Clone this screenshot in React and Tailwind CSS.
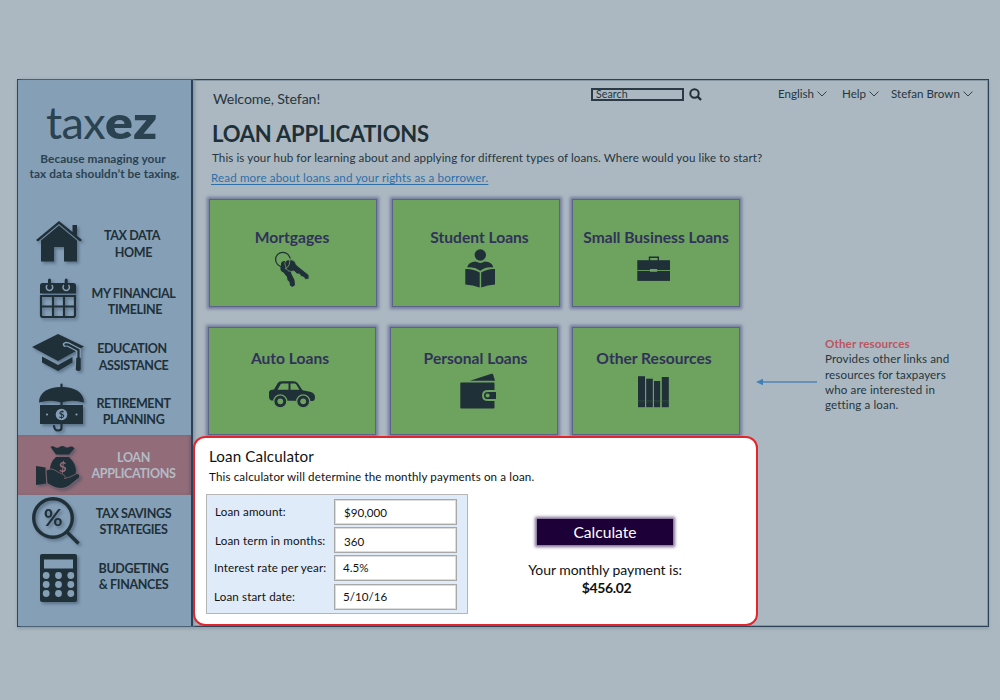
import React from "react";

const ink = "#203038";

function HomeIcon() {
  return (
    <g fill={ink}>
      <path d="M59 221 L36 240 L38 241.500 L59 224 L80 241.500 L82 240 L77 235.700 V225 H72.500 V232 Z" />
      <path d="M59 225.500 L41 240.500 V261.500 H54 V247 H64 V261.500 H77 V240.500 Z" />
    </g>
  );
}

function CalendarIcon() {
  return (
    <g>
      <path d="M40 293.500 V285.500 Q40 283 42.500 283 H73.500 Q76 283 76 285.500 V293.500 Z" fill={ink} />
      <path d="M41 296 H75 V315 Q75 317 73 317 H43 Q41 317 41 315 Z M53 296 V317 M64 296 V317 M41 306.500 H75" fill="none" stroke={ink} strokeWidth="2.200" />
      <g fill="none" stroke="#859fb7" strokeWidth="1.500">
        <path d="M47.300 285 A3.200 3.200 0 1 0 51.700 285" />
        <path d="M64 285 A3.200 3.200 0 1 0 68.400 285" />
      </g>
      <path d="M49.500 280 V287 M66.200 280 V287" stroke={ink} strokeWidth="3" strokeLinecap="round" />
    </g>
  );
}

function CapIcon() {
  return (
    <g>
      <path d="M58 334 L84 346.500 L58 361 L32 347 Z" fill={ink} />
      <path d="M42 356.500 L58 365 L72.500 357 V362.500 L58 371 L42 362.500 Z" fill={ink} />
      <path d="M65 344.500 Q67 343.500 70 345.500 L78.500 350 V357" fill="none" stroke="#859fb7" strokeWidth="4.600" strokeLinecap="round" />
      <path d="M65.500 344.500 Q67 343.800 70 345.500 L78.500 350 V361" fill="none" stroke={ink} strokeWidth="2.200" strokeLinecap="round" />
      <path d="M76.300 358 Q78.500 356.500 80.700 358 V370 Q78.500 371.800 75.800 370 Z" fill={ink} />
    </g>
  );
}

function UmbrellaIcon() {
  return (
    <g>
      <path d="M39 402.500 C39 392 49 387 60.500 387 H62.500 C74 387 84 392 84 402.500 Q72.500 399 61.500 402.500 Q50.500 399 39 402.500 Z" fill={ink} />
      <path d="M61.500 384.500 V428 Q61.500 430.500 58 430.500 Q54.500 430.500 54 426" fill="none" stroke={ink} strokeWidth="2.200" strokeLinecap="round" />
      <rect x="40" y="405" width="43" height="19" fill={ink} />
      <circle cx="61.500" cy="414.500" r="5.800" fill="#859fb7" />
      <circle cx="47" cy="414.500" r="1.100" fill="#859fb7" />
      <circle cx="76.500" cy="414.500" r="1.100" fill="#859fb7" />
      <text x="61.500" y="418.200" textAnchor="middle" fontSize="10" fontFamily="Lato" fill={ink}>$</text>
    </g>
  );
}

function MoneyBagIcon() {
  return (
    <g>
      <path d="M50.500 447 Q53 445.500 55.500 447.500 Q58 448.500 60 446.800 Q62.500 444.800 65.500 447.200 Q68 448.300 70.500 446.500 Q73 446 74.500 448.500 L69 454.500 H56 Z" fill={ink} />
      <path d="M56 457 H69 C75 463 77.500 469 75 476 L66 480 L50 470 C50 464 52.500 460 56 457 Z" fill={ink} />
      <text x="62.500" y="471.500" textAnchor="middle" fontSize="13" fontFamily="Lato" fill="#926d79">$</text>
      <path d="M36 466 L45.500 467.500 L46 483.500 L36 485 Z" fill={ink} />
      <path d="M47 470 Q52 467.500 57 471.500 L64 475 Q66.500 477 64.500 478.500 L70 477 L77 473.500 Q80.500 474 79.500 477.500 L69 486 Q63 490 55 487.500 L47 483.500 L46 470.500 Z" fill={ink} stroke="#926d79" strokeWidth="0.700" />
    </g>
  );
}

function PercentLensIcon() {
  return (
    <g>
      <circle cx="53" cy="518" r="19.300" fill="none" stroke={ink} strokeWidth="3.400" />
      <path d="M66.500 531.500 L78.500 543.500" stroke={ink} strokeWidth="3.400" />
      <text x="53" y="525.500" textAnchor="middle" fontSize="22" fontWeight="700" fontFamily="Lato" textLength="18.500" lengthAdjust="spacingAndGlyphs" fill={ink}>%</text>
    </g>
  );
}

function CalculatorIcon() {
  return (
    <g>
      <rect x="40" y="554" width="37" height="48" rx="2" fill={ink} />
      <rect x="44" y="559.500" width="29" height="9" fill="#859fb7" />
      {[575.5, 584.5, 593.5].map((y) =>
        [46.2, 58.5, 70.8].map((x) => <circle key={x + "-" + y} cx={x} cy={y} r="3.400" fill="#859fb7" />)
      )}
    </g>
  );
}

const nav = [
  { a: "TAX DATA", b: "HOME", row: "h-[57px]", box: "18 215 66 57", h: 57, Icon: HomeIcon, ta: "mr-[3px]", tb: "" },
  { a: "MY FINANCIAL", b: "TIMELINE", row: "h-[58px]", box: "18 272 66 58", h: 58, Icon: CalendarIcon, ta: "", tb: "ml-[3px]" },
  { a: "EDUCATION", b: "ASSISTANCE", row: "h-[53px] mb-1", box: "18 330 66 53", h: 53, Icon: CapIcon, ta: "mr-[3px]", tb: "" },
  { a: "RETIREMENT", b: "PLANNING", row: "h-12", box: "18 387 66 48", h: 48, Icon: UmbrellaIcon, ta: "", tb: "" },
  { a: "LOAN", b: "APPLICATIONS", row: "h-[60px] bg-[#926d79] !text-[#b3bcc6] shadow-[inset_-2px_0_3px_#7f6070]", box: "18 435 66 60", h: 60, Icon: MoneyBagIcon, ta: "", tb: "" },
  { a: "TAX SAVINGS", b: "STRATEGIES", row: "h-[52px]", box: "18 495 66 52", h: 52, Icon: PercentLensIcon, ta: "", tb: "" },
  { a: "BUDGETING", b: "& FINANCES", row: "h-[58px]", box: "18 547 66 58", h: 58, Icon: CalculatorIcon, ta: "", tb: "" },
];

function Sidebar() {
  return (
    <aside className="flex w-[175px] shrink-0 flex-col border-r-2 border-[#2c4257] bg-[#859fb7] shadow-[2px_0_3px_#8496a2]">
      <div className="ml-[28px] mt-[15px] flex h-[54px] whitespace-nowrap text-[45px] leading-[54px] text-[#2b4250]">
        <span className="tracking-[-0.6px]">tax</span>
        <span className="origin-left scale-x-[1.15] font-extrabold">ez</span>
      </div>
      <div className="mt-[2px] flex h-[64px] flex-col items-center text-[11.8px] font-bold leading-[15.3px] tracking-[0.08px] text-[#2b4250]">
        <span className="mr-[3px] mt-[-0.5px] whitespace-nowrap">Because managing your</span>
        <span className="whitespace-nowrap">tax data shouldn’t be taxing.</span>
      </div>
      <nav className="flex flex-col">
        {nav.map(({ a, b, row, box, h, Icon, ta, tb }) => (
          <a key={a} className={"flex items-center text-[12.5px] font-bold leading-[16.5px] tracking-[-0.36px] text-[#203038] " + row}>
            <svg width="66" height={h} viewBox={box} className="shrink-0 overflow-visible drop-shadow-[2px_2px_1.5px_rgba(50,70,90,0.5)]">
              <Icon />
            </svg>
            <span className="flex w-[99px] flex-col items-center whitespace-nowrap pt-[2px]">
              <span className={ta}>{a}</span>
              <span className={tb}>{b}</span>
            </span>
          </a>
        ))}
      </nav>
    </aside>
  );
}

function Chevron() {
  return (
    <svg width="10" height="6" viewBox="0 0 10 6" className="ml-[3px]">
      <path d="M0.500 0.500 L5 5 L9.500 0.500" fill="none" stroke="#34444e" strokeWidth="1" />
    </svg>
  );
}

function TopBar() {
  return (
    <header className="flex h-[38px] items-start text-[#26363f]">
      <span className="ml-5 mt-[10px] w-[378px] whitespace-nowrap text-[14.2px] leading-[18px] tracking-[-0.12px]">Welcome, Stefan!</span>
      <div className="mt-2 flex h-[13px] w-[93px] items-center border-2 border-[#2b3b45] pb-[2px] pl-[3px] text-[10.6px] leading-[10px] tracking-[0.1px]">Search</div>
      <svg width="13" height="13" viewBox="0 0 13 13" className="ml-[5px] mt-2">
        <circle cx="5.500" cy="5.500" r="4.200" fill="none" stroke={ink} strokeWidth="2" />
        <path d="M8.700 8.700 L12 12" stroke={ink} strokeWidth="2.400" />
      </svg>
      <div className="mt-[6px] flex whitespace-nowrap text-[11.6px] leading-[16px]">
        <span className="ml-[76px] flex w-[64px] items-center">English<Chevron /></span>
        <span className="flex w-[49px] items-center">Help<Chevron /></span>
        <span className="flex items-center">Stefan Brown<Chevron /></span>
      </div>
    </header>
  );
}

function KeysIcon() {
  return (
    <svg width="36" height="38" viewBox="274 252 36 38">
      <circle cx="282.800" cy="260.500" r="7.200" fill="none" stroke={ink} strokeWidth="1.200" />
      <path d="M281 266 Q279 272 283.500 273.500 L287 278 L287.500 281 L289.500 283 L290 286.500 L292.500 288 L295 286 L294.500 281 L291 274 Q292 271 289.500 269 L285 262 Q280.500 262 281 266 Z" fill={ink} />
      <path d="M285.500 267 Q283.500 262.500 287.500 261 L291.500 260.800 Q295 261 296.500 266 L309 276 V280 L305.500 280.500 L303.500 278 L301 277.500 L299.500 275 L297 275 L294 272 Q286.500 274 285.500 267 Z" fill={ink} stroke="#6da25f" strokeWidth="0.800" />
      <path d="M285 270 Q291 267 289.500 259" fill="none" stroke="#6da25f" strokeWidth="0.900" />
    </svg>
  );
}

function ReaderIcon() {
  return (
    <svg width="32" height="40" viewBox="463 250 32 40">
      <g fill={ink}>
        <circle cx="479.300" cy="256" r="5.700" />
        <path d="M466.300 268.500 Q467 263 475 262.500 Q479.300 265.300 483.600 262.500 Q491.500 263 492.200 268.500 Q485 267.500 479.300 271.800 Q473 267.500 466.300 268.500 Z" />
        <path d="M464.300 270 Q472 269.500 478.700 273.500 V288.500 Q472 286 464.300 285.500 Z M494 270 Q486.500 269.500 480.200 273.500 V288.500 Q486.500 286 494 285.500 Z" />
      </g>
    </svg>
  );
}

function BriefcaseIcon() {
  return (
    <svg width="34" height="26" viewBox="637 257 34 26">
      <path d="M649.500 262 V258.200 H658.300 V262" fill="none" stroke={ink} strokeWidth="1.400" />
      <rect x="637.300" y="261.200" width="32.700" height="20.700" fill={ink} />
      <rect x="637.300" y="271" width="32.700" height="0.900" fill="#6da25f" />
      <rect x="650" y="270" width="7.200" height="2.800" fill="#6da25f" />
    </svg>
  );
}

function CarIcon() {
  return (
    <svg width="48" height="28" viewBox="268 381 48 28">
      <path d="M271 400.500 Q269 400 269 397 V392.500 Q269 389.700 274 389.500 L277.500 383.500 Q278.500 381.300 282 381.300 H293 Q296.500 381.300 298 383.500 L302.500 390.300 L310 391.800 Q315 393 315 397 Q315 400.500 313 401 Z" fill={ink} />
      <path d="M277.500 389.800 L280.500 384.500 Q281 383.500 282.500 383.500 H288.500 V389.800 Z M290.500 383.500 H294.500 Q295.500 383.500 296.300 384.500 L299.500 389.800 H290.500 Z" fill="#6da25f" />
      <g fill={ink} stroke="#6da25f" strokeWidth="1.200">
        <circle cx="280.300" cy="401.300" r="6.500" />
        <circle cx="303.200" cy="401.300" r="6.500" />
      </g>
      <circle cx="280.300" cy="401.300" r="2.900" fill="#6da25f" />
      <circle cx="303.200" cy="401.300" r="2.900" fill="#6da25f" />
    </svg>
  );
}

function WalletIcon() {
  return (
    <svg width="36" height="36" viewBox="460 373 36 36">
      <path d="M470 380.700 L491.500 373.700 Q492.800 373.400 493.200 374.700 L495 380.700 Z" fill={ink} />
      <rect x="460.300" y="382.600" width="34.200" height="25.800" rx="1" fill={ink} />
      <path d="M496 391 H488 Q483 391 483 395.400 Q483 400 488 400 H496" fill={ink} stroke="#6da25f" strokeWidth="2" />
      <circle cx="487.600" cy="395.500" r="2" fill="#6da25f" />
      <path d="M494 392 H495.200 V399 H494 Z" fill={ink} />
    </svg>
  );
}

function BooksIcon() {
  return (
    <svg width="32" height="32" viewBox="637 376 32 32">
      <g fill={ink}>
        <rect x="638" y="376.200" width="7" height="31" />
        <rect x="646.200" y="378.700" width="6.600" height="28.500" />
        <rect x="654" y="381" width="6.200" height="26.200" />
        <rect x="661.800" y="377" width="7" height="30.200" />
      </g>
      <path d="M638 400.500 H645 M646.200 400.500 H652.800 M654 400.500 H660.200 M661.800 400.500 H668.800 M638 402 H645 M646.200 402 H652.800 M654 402 H660.200 M661.800 402 H668.800" stroke="#35503f" strokeWidth="0.500" />
    </svg>
  );
}

function Card({ title, Icon, titleCls, iconCls, place }) {
  return (
    <button
      className={
        "flex h-[108px] w-[168px] shrink-0 flex-col items-center border border-[#5b6488] bg-[#6da25f] shadow-[0_0_3px_2px_#74799d] " + place
      }
    >
      <span className={"whitespace-nowrap text-[15.6px] font-bold leading-[18px] text-[#31325a] " + titleCls}>{title}</span>
      <span className={iconCls}>
        <Icon />
      </span>
    </button>
  );
}

function Field({ label, value, row, labelCls = "", valueCls = "" }) {
  return (
    <label className={"flex items-center " + row}>
      <span className={"w-[127px] whitespace-nowrap pl-2 tracking-[0.14px] " + labelCls}>{label}</span>
      <span className="flex h-[26px] w-[123px] items-center border border-[#a9a8a8] bg-white pl-[9px] shadow-[inset_0_0_0_1px_#dcdcdc]">
        <span className={valueCls}>{value}</span>
      </span>
    </label>
  );
}

function LoanCalculator() {
  return (
    <section className="relative flex h-[190px] w-[565px] shrink-0 rounded-[12px] border-2 border-[#e3262d] bg-white text-[11.6px] text-[#111]">
      <div className="ml-[11px] flex w-[262px] flex-col">
        <h2 className="ml-[3px] mt-[9px] whitespace-nowrap text-[15.2px] leading-[18px] tracking-[0.1px]">Loan Calculator</h2>
        <p className="ml-[3px] mt-[4px] whitespace-nowrap leading-[15px] tracking-[0.14px]">This calculator will determine the monthly payments on a loan.</p>
        <div className="mt-[10px] flex h-[120px] w-[262px] flex-col border border-[#b6b4b4] bg-[#dfebf8] pt-1">
          <Field label="Loan amount:" value="$90,000" row="h-[26px]" valueCls="mt-[1px]" />
          <Field label="Loan term in months:" value="360" row="mt-[2px] h-[26px]" valueCls="mt-[3px]" labelCls="mt-[2px]" />
          <Field label="Interest rate per year:" value="4.5%" row="mt-[2px] h-[26px]" labelCls="-ml-px !w-[128px]" valueCls="-ml-px" />
          <Field label="Loan start date:" value="5/10/16" row="mt-[3px] h-[26px]" labelCls="-ml-px !w-[128px]" valueCls="-ml-px" />
        </div>
      </div>
      <div className="ml-[57px] flex w-[160px] flex-col items-center pt-[81px]">
        <button className="h-[26px] w-[136px] bg-[#1e0038] text-[15.6px] leading-[26px] text-white shadow-[0_0_3px_2px_#7b6a90]">
          Calculate
        </button>
        <span className="mt-[16px] whitespace-nowrap text-[14px] leading-[18px] tracking-[-0.06px]">Your monthly payment is:</span>
        <span className="ml-[3px] text-[14px] font-bold leading-[18px] tracking-[-0.35px]">$456.02</span>
      </div>
    </section>
  );
}

export default function App() {
  return (
    <div className="flex h-[700px] w-[1000px] flex-col overflow-hidden bg-[#abb8c1] pl-[17px] pt-[79px] font-['Lato',sans-serif]">
      <div className="flex h-[548px] w-[972px] border border-[#2c4257] shadow-[inset_0_0_0_1px_#8596a3,0_2px_3px_#93a1ab]">
        <Sidebar />
        <main className="flex flex-1 flex-col">
          <TopBar />
          <h1 className="ml-[19px] mt-[3px] whitespace-nowrap text-[22px] font-bold leading-[26px] tracking-[-0.2px] text-[#203038]">LOAN APPLICATIONS</h1>
          <p className="ml-[19px] mt-[3px] whitespace-nowrap text-[11.6px] leading-[15px] tracking-[0.1px] text-[#26363f]">
            This is your hub for learning about and applying for different types of loans. Where would you like to start?
          </p>
          <a className="ml-[18px] mt-[5px] self-start whitespace-nowrap text-[11.6px] leading-[15px] tracking-[0.14px] text-[#2f6fa8] underline underline-offset-2">
            Read more about loans and your rights as a borrower.
          </a>
          <div className="mt-[14px] flex h-[128px] pl-4">
            <Card title="Mortgages" Icon={KeysIcon} titleCls="mt-[28px] mr-[2px]" iconCls="mt-[5px] mr-[2px]" place="" />
            <Card title="Student Loans" Icon={ReaderIcon} titleCls="mt-[28px] ml-[7px]" iconCls="mt-[3px] ml-[7px]" place="ml-[15px]" />
            <Card title="Small Business Loans" Icon={BriefcaseIcon} titleCls="mt-[28px]" iconCls="mt-[10px] mr-[4px]" place="ml-[12px]" />
          </div>
          <div className="flex h-[109px] pl-[15px]">
            <Card title="Auto Loans" Icon={CarIcon} titleCls="mt-[21px] mr-[4px]" iconCls="mt-[14px]" place="" />
            <Card title="Personal Loans" Icon={WalletIcon} titleCls="mt-[21px] ml-[3px]" iconCls="mt-[6px] ml-[8px]" place="ml-[14px]" />
            <Card title="Other Resources" Icon={BooksIcon} titleCls="mt-[21px] mr-[4px]" iconCls="mt-[9px] mr-[6px]" place="ml-[14px]" />
            <div className="flex">
              <svg width="62" height="10" viewBox="0 0 62 10" className="ml-4 mt-[50px]">
                <path d="M6 5 H61" stroke="#4f86b6" strokeWidth="1.500" />
                <path d="M0 5 L7 1.700 V8.300 Z" fill="#4280b3" />
              </svg>
              <div className="ml-[7px] mt-[9px] flex flex-col whitespace-nowrap text-[11.6px] leading-[15.3px] tracking-[0.12px] text-[#26363f]">
                <span className="font-bold text-[#bb5560]">Other resources</span>
                <span>Provides other links and</span>
                <span>resources for taxpayers</span>
                <span>who are interested in</span>
                <span>getting a loan.</span>
              </div>
            </div>
          </div>
          <LoanCalculator />
        </main>
      </div>
    </div>
  );
}
